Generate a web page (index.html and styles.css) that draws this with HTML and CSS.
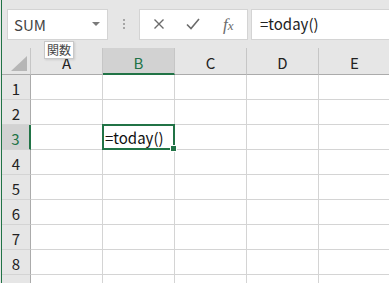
FILE: index.html
```html
<!doctype html>
<html>
<head>
    <meta charset="utf-8">
    <link rel="stylesheet" href="styles.css">
</head>
<body>
<div class="app">
    <div class="toolbar">
        <div class="name-box">
            <span class="name">SUM</span>
            <span class="caret"></span>
        </div>
        <div class="grip">
            <span></span><span></span><span></span>
        </div>
        <div class="buttons">
            <svg class="btn" width="12" height="12" viewBox="0 0 12 12">
                <path d="M1.5 1.5 L10.5 10.5 M10.5 1.5 L1.5 10.5" stroke="#6b6b6b" stroke-width="1.4" fill="none"/>
            </svg>
            <svg class="btn check" width="14" height="12" viewBox="0 0 14 12">
                <path d="M1 6.5 L5 10.5 L13 1" stroke="#6b6b6b" stroke-width="1.6" fill="none"/>
            </svg>
            <span class="fx"><i>f</i><i class="x">x</i></span>
        </div>
        <div class="formula">=today()</div>
    </div>

    <div class="tip">関数</div>

    <div class="sheet">
        <div class="corner"><span class="tri"></span></div>
        <div class="col">A</div>
        <div class="col active">B</div>
        <div class="col">C</div>
        <div class="col">D</div>
        <div class="col">E</div>

        <div class="rh">1</div><div class="cell"></div><div class="cell"></div><div class="cell"></div><div class="cell"></div><div class="cell"></div>
        <div class="rh">2</div><div class="cell"></div><div class="cell"></div><div class="cell"></div><div class="cell"></div><div class="cell"></div>
        <div class="rh active">3</div><div class="cell"></div><div class="cell selected">=today()<span class="handle"></span></div><div class="cell"></div><div class="cell"></div><div class="cell"></div>
        <div class="rh">4</div><div class="cell"></div><div class="cell"></div><div class="cell"></div><div class="cell"></div><div class="cell"></div>
        <div class="rh">5</div><div class="cell"></div><div class="cell"></div><div class="cell"></div><div class="cell"></div><div class="cell"></div>
        <div class="rh">6</div><div class="cell"></div><div class="cell"></div><div class="cell"></div><div class="cell"></div><div class="cell"></div>
        <div class="rh">7</div><div class="cell"></div><div class="cell"></div><div class="cell"></div><div class="cell"></div><div class="cell"></div>
        <div class="rh">8</div><div class="cell"></div><div class="cell"></div><div class="cell"></div><div class="cell"></div><div class="cell"></div>
        <div class="rh"></div><div class="cell"></div><div class="cell"></div><div class="cell"></div><div class="cell"></div><div class="cell"></div>
    </div>
</div>
</body>
</html>
```

FILE: styles.css
```css
html,
body {
    margin: 0;
    padding: 0;
    width: 389px;
    height: 283px;
    overflow: hidden;
    background: #fff;
    font-family: "Noto Sans CJK JP", "Noto Sans", sans-serif;
}

.app {
    position: relative;
    height: 283px;
    overflow: hidden;
    border-left: 1px solid #e6e6e6;
    box-shadow: inset 1px 0 0 #217346;
    padding-left: 1px;
    background: #fff;
}

.toolbar {
    display: flex;
    align-items: center;
    height: 48px;
    padding-left: 5px;
    background: #e6e6e6;
}

.name-box {
    display: flex;
    align-items: center;
    width: 99px;
    height: 29px;
    border: 1px solid #d4d4d4;
    background: #fff;
}

.name {
    flex: 1;
    padding-left: 6px;
    font-size: 15px;
    color: #444;
}

.caret {
    width: 0;
    height: 0;
    margin-right: 7px;
    border-left: 4px solid transparent;
    border-right: 4px solid transparent;
    border-top: 4px solid #7a7a7a;
}

.grip {
    display: flex;
    flex-direction: column;
    gap: 2px;
    width: 31px;
    align-items: center;
}

.grip span {
    width: 2px;
    height: 2px;
    background: #a6a6a6;
}

.buttons {
    display: flex;
    align-items: center;
    width: 107px;
    height: 29px;
    border: 1px solid #d4d4d4;
    background: #fff;
}

.btn {
    margin-left: 13px;
}

.btn.check {
    margin-left: 21px;
}

.fx {
    margin-left: 23px;
    font-family: "Liberation Serif", serif;
    font-size: 17px;
    line-height: 1;
    color: #6b6b6b;
}

.fx .x {
    font-size: 13px;
}

.formula {
    flex: 1;
    height: 29px;
    margin-left: 3px;
    padding-left: 8px;
    border: 1px solid #d4d4d4;
    border-right: 0;
    background: #fff;
    font-size: 15px;
    line-height: 28px;
    color: #222;
}

.tip {
    position: absolute;
    left: 43px;
    top: 41px;
    padding: 0 2px;
    height: 16px;
    border: 1px solid #c8c8c8;
    background: #fff;
    font-size: 12px;
    line-height: 16px;
    color: #444;
    box-shadow: 1px 1px 2px rgba(0, 0, 0, 0.12);
}

.sheet {
    display: grid;
    grid-template-columns: 29px repeat(5, 72px);
    grid-template-rows: 27px repeat(9, 25px);
    background: #fff;
}

.corner,
.col,
.rh {
    background: #e6e6e6;
    border-right: 1px solid #c6c6c6;
    border-bottom: 1px solid #ababab;
    box-sizing: border-box;
}

.corner {
    position: relative;
}

.tri {
    position: absolute;
    right: 3px;
    bottom: 3px;
    width: 0;
    height: 0;
    border-left: 16px solid transparent;
    border-bottom: 15px solid #b6b6b6;
}

.col {
    display: flex;
    align-items: center;
    justify-content: center;
    padding-top: 3px;
    font-size: 15px;
    color: #222;
}

.col.active {
    background: #d2d2d2;
    border-bottom: 2px solid #217346;
    color: #217346;
}

.rh {
    display: flex;
    align-items: center;
    justify-content: center;
    padding-top: 2px;
    border-right: 1px solid #ababab;
    border-bottom: 1px solid #d4d4d4;
    font-size: 15px;
    color: #222;
}

.rh.active {
    background: #d2d2d2;
    border-right: 2px solid #217346;
    color: #217346;
}

.cell {
    border-right: 1px solid #d4d4d4;
    border-bottom: 1px solid #d4d4d4;
    box-sizing: border-box;
}

.cell.selected {
    position: relative;
    margin: -1px 0 0 -1px;
    border: 2px solid #217346;
    padding-left: 1px;
    font-size: 15px;
    line-height: 23px;
    color: #111;
}

.handle {
    position: absolute;
    right: -4px;
    bottom: -4px;
    width: 5px;
    height: 5px;
    background: #217346;
    border: 1px solid #fff;
}
```
